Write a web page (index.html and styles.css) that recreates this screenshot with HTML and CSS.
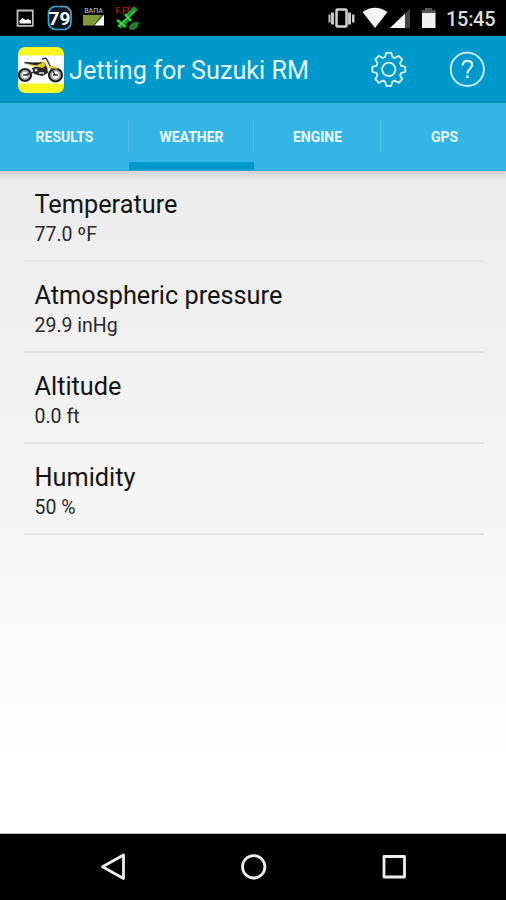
FILE: index.html
```html
<!DOCTYPE html>
<html lang="en">
<head>
<meta charset="utf-8">
<title>Jetting for Suzuki RM</title>
<link rel="stylesheet" href="styles.css">
</head>
<body>
<div class="screen">
  <div class="status">
    <svg class="status-left" width="150" height="36" viewBox="0 0 150 36">
      <path fill="none" stroke="#bdbdbd" stroke-width="1.8" d="M17.500 10.500h15.300v15.300H17.500z"/>
      <path fill="#fff" d="M19.500 23.500v-3l3-2.500 3 2 3-1 2.500 2v2.500z"/>
      <rect x="48.500" y="6.500" width="22.500" height="23" rx="7" fill="#071722" stroke="#35a5d5" stroke-width="1.700"/>
      <path d="M60 6.500h4q7 0 7 8" fill="none" stroke="#77848b" stroke-width="1.700"/>
      <text class="badge" x="59.500" y="24.500" text-anchor="middle">79</text>
      <text class="data" x="93.500" y="12.500" text-anchor="middle">ВАПА</text>
      <path fill="#7f9a32" d="M83 15h19l-8 10.500H83z"/>
      <path fill="#fff" d="M104 14.500v11H94z"/>
      <path stroke="#050" d="M94 25.500l9-11"/>
      <text class="fix" x="115.500" y="14">F.FIX</text>
      <path stroke="#149c29" stroke-width="5" d="M119 27l9-8m0-3l8-8"/>
      <path stroke="#30d63b" stroke-width="2.500" d="M117 20l9 7m-1-13l6 7"/>
      <path fill="#247d2b" d="M129 29q0-8 10-7-1 8-7 8z"/>
      <path stroke="#72dc68" stroke-width="1" d="M118 27l17-16"/>
    </svg>
    <div class="status-right">
      <svg width="118" height="36" viewBox="322 0 118 36">
        <path fill="#c8c8c8" d="M328.500 14.500h2v8h-2zm2.500-2h3v12h-3zm17 0h3v12h-3zm4 2h2.500v8H352z"/>
        <rect x="336.500" y="9.500" width="10" height="17" rx="1" fill="#000" stroke="#d2d2d2" stroke-width="2.500"/>
        <path fill="#f5f5f5" d="M362.500 12q12.500-8.500 25 0L375 28z"/>
        <path fill="#f5f5f5" d="M390 28l15-14.500V28z"/>
        <path fill="#444" d="M405 13.500l5-5V28h-5z"/>
        <path fill="#555" d="M422 10h3V8h7v2h3.500v4H422z"/>
        <path fill="#f0f0f0" d="M422 13h13.500v15H422z"/>
      </svg>
      <span class="clock">15:45</span>
    </div>
  </div>
  <header class="bar">
    <svg class="logo" width="46" height="46" viewBox="18 47 46 46">
      <rect x="18" y="47" width="46" height="46" rx="7" fill="#fcf524"/>
      <path fill="#fff" d="M18 55.500h46v28H18z"/>
      <g fill="#aaa" stroke="#222" stroke-width="2.200"><circle cx="25" cy="75" r="6"/><circle cx="55.500" cy="75" r="6.500"/></g>
      <g fill="#fff"><circle cx="25" cy="75" r="3"/><circle cx="55.500" cy="75" r="3.500"/></g>
      <path stroke="#333" stroke-width="1.500" d="M23 75h5m25 0h5m-3 0l-9-17m0 0l-4 1M25 75l9-3"/>
      <path fill="#292929" d="M32 68l8-3 7 1 1 7-6 3-8-2z"/>
      <path fill="#ddc72f" d="M24 63l13 2 5-4 5 2-4 5-11-2zM48 66q8-1 10 3l-9-1z"/>
      <path stroke="#222" stroke-width="1.300" d="M24.500 62.500l12 2 5-2"/>
      <circle cx="36" cy="70" r="1.500" fill="#ccc"/>
      <path fill="#bbb" d="M39 72h5v2h-5z"/>
      <path stroke="#d44" d="M45 64l2 4"/>
    </svg>
    <h1 class="title">Jetting for Suzuki RM</h1>
    <svg class="actions" width="116" height="40" viewBox="370 49 116 40" fill="none" stroke="#d9f3fc" stroke-width="1.800" stroke-linejoin="round">
      <g transform="translate(388.800 69.300)">
        <path d="M-3.700-12.200L-2.500-16.500H2.500L3.700-12.200Q5-12 6-11.300L9.900-13.500 13.500-9.900 11.300-6Q12-5 12.200-3.700L16.500-2.500V2.500L12.200 3.700Q12 5 11.300 6L13.500 9.900 9.900 13.500 6 11.300Q5 12 3.700 12.200L2.500 16.500H-2.500L-3.700 12.200Q-5 12-6 11.300L-9.900 13.500-13.500 9.900-11.300 6Q-12 5-12.200 3.700L-16.500 2.500V-2.500L-12.200-3.700Q-12-5-11.300-6L-13.500-9.900-9.900-13.500-6-11.300Q-5-12-3.700-12.200Z"/>
        <circle r="6.700"/>
      </g>
      <circle cx="467.300" cy="69.300" r="16.600"/>
      <path stroke-width="2.200" d="M462.700 65.500q0-4.700 4.700-4.700t4.700 4.200c0 3.500-4.600 4-4.600 8.500"/>
      <path stroke-width="2.400" d="M467.400 75.500v2.500"/>
    </svg>
  </header>
  <nav class="tabs">
    <div class="tab">RESULTS</div>
    <div class="tab active">WEATHER</div>
    <div class="tab">ENGINE</div>
    <div class="tab">GPS</div>
  </nav>
  <main class="list">
    <div class="item"><div class="name">Temperature</div><div class="value">77.0 ºF</div></div>
    <div class="item"><div class="name">Atmospheric pressure</div><div class="value">29.9 inHg</div></div>
    <div class="item"><div class="name">Altitude</div><div class="value">0.0 ft</div></div>
    <div class="item"><div class="name">Humidity</div><div class="value">50 %</div></div>
  </main>
  <footer class="nav">
    <svg width="506" height="66" viewBox="0 834 506 66" fill="none" stroke="#eee" stroke-width="2.800" stroke-linejoin="round">
      <path d="M123.500 855v23.500L102.500 866.700z"/>
      <circle cx="253.700" cy="866.800" r="11.200"/>
      <rect x="384" y="856.500" width="20.500" height="20.500"/>
    </svg>
  </footer>
</div>
</body>
</html>
```
FILE: styles.css
```css
* { box-sizing: border-box; }
body { margin: 0; font-family: Roboto, sans-serif; }
.screen { width: 506px; height: 900px; display: flex; flex-direction: column; overflow: hidden; }
.status { height: 36px; background: #000; display: flex; justify-content: space-between; }
.status-right { display: flex; width: 184px; }
.clock { color: #ddd; font-size: 20px; font-weight: 500; line-height: 38px; margin-left: 6px; letter-spacing: -0.3px; }
.badge { font-size: 19px; font-weight: 700; fill: #fff; }
.data { font-size: 7px; font-weight: 500; fill: #aaa; }
.fix { font-size: 9px; font-weight: 700; fill: #9c1c16; }
.bar { height: 67px; background: #0099cc; border-bottom: 2px solid #078bba; display: flex; align-items: center; padding: 1px 20px 0 18px; }
.logo { margin-top: 1px; }
.title { margin: 3px 0 0 5px; font-size: 25.200px; font-weight: 400; line-height: 32px; color: #e5f6fc; white-space: nowrap; }
.actions { margin-left: auto; }
.tabs { height: 68px; background: #33b5e5; display: grid; grid-template-columns: 129px 125px 127px 125px; align-items: center; border-bottom: 1px solid #36a8d3; }
.tab { height: 67px; line-height: 69px; text-align: center; color: #eaf8fe; font-size: 14px; font-weight: 700; background: linear-gradient(#4bbde8, #4bbde8) right 16px / 1px 33px no-repeat; }
.tab:last-child { background: none; padding-left: 2px; }
.tab.active { border-bottom: 8px solid #0099cc; }
.list { flex: 1; padding: 0 22px 0 24px; background: linear-gradient(#d2d2d2, rgba(225, 225, 225, 0)) top / 100% 10px no-repeat, linear-gradient(#ededed, #f4f4f4 48%, #fff 90%); border-bottom: 1px solid #bbb; }
.item { height: 91px; padding: 18px 11px 0 10.500px; border-bottom: 2px solid #e4e4e4; color: #151515; }
.name { font-size: 25.300px; line-height: 32px; }
.value { font-size: 19.500px; line-height: 27px; color: #292929; }
.nav { height: 66px; background: #000; }
```
